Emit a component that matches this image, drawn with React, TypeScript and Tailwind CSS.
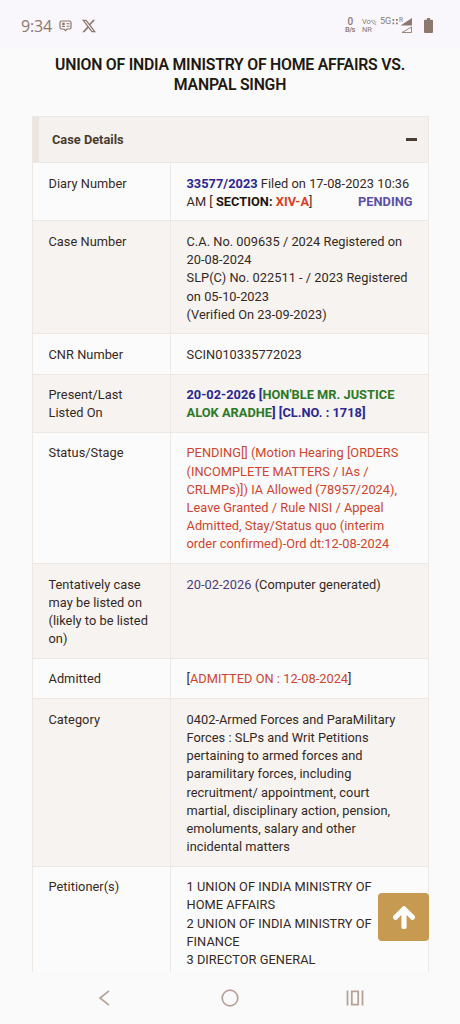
import type { ReactNode } from "react";
import { FaArrowUp } from "react-icons/fa";

type Row = { label: string[]; lines: ReactNode[]; height: string };

const rows: Row[] = [
  {
    label: ["Diary Number"],
    height: "h-[58.4px]",
    lines: [
      <>
        <b className="font-bold text-[#2b2793]">33577/2023</b> Filed on 17-08-2023 10:36
      </>,
      <span className="flex w-[226px] justify-between">
        <span>
          AM [ <b className="font-bold text-[#1d150e]">SECTION: <span className="text-[#e23a1c]">XIV-A</span></b>]
        </span>
        <b className="font-bold text-[#5a51a6]">PENDING</b>
      </span>,
    ],
  },
  {
    label: ["Case Number"],
    height: "h-[113px]",
    lines: [
      "C.A. No. 009635 / 2024 Registered on",
      "20-08-2024",
      "SLP(C) No. 022511 - / 2023 Registered",
      "on 05-10-2023",
      "(Verified On 23-09-2023)",
    ],
  },
  { label: ["CNR Number"], height: "h-[40.2px]", lines: ["SCIN010335772023"] },
  {
    label: ["Present/Last", "Listed On"],
    height: "h-[58.4px]",
    lines: [
      <b className="font-bold text-[#2b2793]">
        20-02-2026 [<span className="text-[#2b7927]">HON'BLE MR. JUSTICE</span>
      </b>,
      <b className="font-bold text-[#2b2793]">
        <span className="text-[#2b7927]">ALOK ARADHE</span>] [CL.NO. : 1718]
      </b>,
    ],
  },
  {
    label: ["Status/Stage"],
    height: "h-[131.2px]",
    lines: [
      "PENDING[] (Motion Hearing [ORDERS",
      "(INCOMPLETE MATTERS / IAs /",
      "CRLMPs)]) IA Allowed (78957/2024),",
      "Leave Granted / Rule NISI / Appeal",
      "Admitted, Stay/Status quo (interim",
      "order confirmed)-Ord dt:12-08-2024",
    ].map((line) => <span className="text-[#d0432c]">{line}</span>),
  },
  {
    label: ["Tentatively case", "may be listed on", "(likely to be listed", "on)"],
    height: "h-[94.8px]",
    lines: [
      <>
        <span className="text-[#4b3a7d]">20-02-2026</span> (Computer generated)
      </>,
    ],
  },
  {
    label: ["Admitted"],
    height: "h-[40.4px]",
    lines: [
      <>
        [<span className="text-[#d0432c]">ADMITTED ON : 12-08-2024</span>]
      </>,
    ],
  },
  {
    label: ["Category"],
    height: "h-[167.4px]",
    lines: [
      "0402-Armed Forces and ParaMilitary",
      "Forces : SLPs and Writ Petitions",
      "pertaining to armed forces and",
      "paramilitary forces, including",
      "recruitment/ appointment, court",
      "martial, disciplinary action, pension,",
      "emoluments, salary and other",
      "incidental matters",
    ],
  },
  {
    label: ["Petitioner(s)"],
    height: "h-[140px]",
    lines: [
      "1 UNION OF INDIA MINISTRY OF",
      "HOME AFFAIRS",
      "2 UNION OF INDIA MINISTRY OF",
      "FINANCE",
      "3 DIRECTOR GENERAL",
    ],
  },
];

function StatusBar() {
  return (
    <header className="flex h-12 shrink-0 items-center bg-[#f9f7fb] pt-[3px] pr-[27px] pl-[21px] text-[#8b786e]">
      <span className="w-[38px] font-['Open_Sans',sans-serif] text-[16px] leading-5 tracking-[-0.2px] whitespace-nowrap">9:34</span>
      <svg className="h-3 w-[13px]" viewBox="0 0 13 12" fill="none" stroke="currentColor" strokeWidth="1.2">
        <path d="M2.500 1h8A1.500 1.500 0 0 1 12 2.500v5A1.500 1.500 0 0 1 10.500 9H8l-1.500 1.700L5 9H2.500A1.500 1.500 0 0 1 1 7.500v-5A1.500 1.500 0 0 1 2.500 1Z" />
        <path d="M7.500 3.700h3M7.500 6.200h3M3 6.500h3" strokeWidth="1" />
        <circle cx="4.500" cy="4" r=".8" fill="currentColor" />
      </svg>
      <svg className="ml-[10px] h-[14px] w-[14px]" viewBox="0 0 24 24" fill="currentColor">
        <path d="M18.9 1.150h3.680l-8.040 9.190L24 22.850h-7.410l-5.800-7.590-6.640 7.590H.470l8.600-9.830L0 1.150h7.590l5.240 6.930zm-1.290 19.500h2.040L6.490 3.240H4.300z" />
      </svg>
      <div className="ml-auto flex items-center">
        <div className="flex w-[17px] flex-col font-['Roboto',sans-serif]">
          <span className="pl-[2.5px] text-[10px] leading-[8px] font-medium">0</span>
          <span className="text-[7.500px] leading-[8px] font-medium tracking-[-0.6px]">B/s</span>
        </div>
        <div className="flex w-[18px] flex-col font-['Roboto',sans-serif] text-[7.500px] leading-[8px]">
          <span className="flex whitespace-nowrap">
            Vo
            <svg className="mt-[1px] h-[6px] w-[6px]" viewBox="0 0 6 6" fill="none" stroke="currentColor" strokeWidth=".8">
              <path d="M.7.8c0 2.500 2 4.500 4.500 4.500M2.800.8c0 1.400 1 2.400 2.400 2.400" />
            </svg>
          </span>
          <span>NR</span>
        </div>
        <svg className="h-[17px] w-[33px]" viewBox="0 0 33 17">
          <text x="0" y="7.200" fontFamily="Roboto, sans-serif" fontSize="9" fill="currentColor">5G</text>
          <path d="M12.500 2h1.700v1.700h-1.700zM16 2h1.700v1.700H16zM12.500 5.500h1.700v1.700h-1.700zM16 5.500h1.700v1.700H16z" fill="currentColor" />
          <text x="19" y="5" fontFamily="Roboto, sans-serif" fontSize="6.500" fill="currentColor">R</text>
          <path d="M20.500 8.500 32 1v7.500Z" fill="currentColor" />
          <path d="M22 15.500 31.500 10v5.500Z" fill="none" stroke="currentColor" strokeWidth=".9" />
        </svg>
        <svg className="ml-[11px] h-[15px] w-[9px]" viewBox="0 0 9 15" fill="currentColor">
          <path d="M3 0h3v1.700h2a1 1 0 0 1 1 1V14a1 1 0 0 1-1 1H1a1 1 0 0 1-1-1V2.700a1 1 0 0 1 1-1h2Z" />
        </svg>
      </div>
    </header>
  );
}

export default function App() {
  return (
    <div className="relative flex h-[1024px] w-[460px] flex-col overflow-hidden bg-[#fbfafb] font-['Roboto',sans-serif] text-[#35291f]">
      <StatusBar />
      <main className="h-[924px] overflow-hidden px-8 pt-[6.500px]">
        <h1 className="text-center text-[15.800px] leading-[20.500px] font-semibold tracking-[-0.220px] whitespace-nowrap text-[#21180f]">
          UNION OF INDIA MINISTRY OF HOME AFFAIRS VS.
          <br />
          MANPAL SINGH
        </h1>
        <section className="mt-[20.500px] w-[397px] border border-[#eee8e4]">
          <div className="flex h-[45px] items-center border-l-[6px] border-[#ebe4df] bg-[#f5f1ee] pr-[11px] pl-[13px]">
            <h2 className="text-[12.800px] font-bold text-[#493c30]">Case Details</h2>
            <span className="ml-auto h-[3px] w-[11px] bg-[#493c30]" />
          </div>
          {rows.map((row, index) => (
            <div
              key={row.label[0]}
              className={`flex border-t border-[#eee8e4] text-[12.800px] leading-[18.200px] tracking-[0.030px] whitespace-nowrap ${row.height} ${index % 2 ? "bg-[#f6f3f1]" : "bg-[#fcfbfc]"}`}
            >
              <div className="w-[138px] shrink-0 border-r border-[#eee8e4] pt-[11.500px] pl-[15.500px]">
                {row.label.map((line) => (
                  <div key={line}>{line}</div>
                ))}
              </div>
              <div className="min-w-0 flex-1 pt-[11.500px] pl-[15.500px]">
                {row.lines.map((line, i) => (
                  <div key={i}>{line}</div>
                ))}
              </div>
            </div>
          ))}
        </section>
      </main>
      <nav className="flex h-[52px] shrink-0 items-center bg-[#fbfafb] text-[#b7a298]">
        <svg className="ml-[98px] h-4 w-3" viewBox="0 0 12 16" fill="none" stroke="currentColor" strokeWidth="1.700">
          <path d="M11 .8 2 8l9 7.200" />
        </svg>
        <svg className="ml-[111px] h-[18px] w-[18px]" viewBox="0 0 18 18" fill="none" stroke="currentColor" strokeWidth="1.700">
          <circle cx="9" cy="9" r="7.800" />
        </svg>
        <svg className="ml-[107px] h-4 w-[18px]" viewBox="0 0 18 16" fill="none" stroke="currentColor" strokeWidth="1.800">
          <path d="M1.500.5v15M16.500.5v15M5.800 1.300h6.400v13.400H5.800Z" />
        </svg>
      </nav>
      <button className="absolute top-[893px] left-[378px] flex h-12 w-[51px] items-center justify-center rounded-[4px] bg-[#c69a51]" aria-label="Scroll to top">
        <FaArrowUp className="h-[25px] w-[22px] stroke-white stroke-[26px] text-white" />
      </button>
    </div>
  );
}
